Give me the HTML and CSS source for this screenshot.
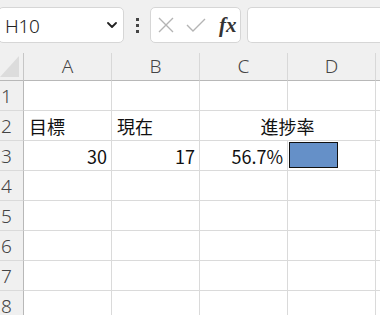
FILE: index.html
```html
<!DOCTYPE html>
<html lang="ja">
<head>
<meta charset="utf-8">
<link rel="stylesheet" href="styles.css">
</head>
<body>
<div class="app">
  <div class="toolbar">
    <div class="namebox">
      <span class="name">H10</span>
      <svg class="chev" width="10" height="6" viewBox="0 0 10 6"><path d="M1 1 L5 5 L9 1" fill="none" stroke="#222" stroke-width="1.8" stroke-linecap="round" stroke-linejoin="round"/></svg>
    </div>
    <div class="dots"><i></i><i></i><i></i></div>
    <div class="fxbox">
      <svg width="16" height="16" viewBox="0 0 16 16"><path d="M1 1 L15 15 M15 1 L1 15" stroke="#b4b4b4" stroke-width="1.4" fill="none"/></svg>
      <svg width="20" height="14" viewBox="0 0 20 14"><path d="M1 7 L7 13 L19 1" stroke="#b4b4b4" stroke-width="1.4" fill="none"/></svg>
      <span class="fx">fx</span>
    </div>
    <div class="formula"></div>
  </div>
  <div class="sheet">
    <div class="corner"><span class="tri"></span></div>
    <div class="ch">A</div><div class="ch">B</div><div class="ch">C</div><div class="ch">D</div><div class="ch last"></div>

    <div class="rh">1</div><div class="c"></div><div class="c"></div><div class="c"></div><div class="c"></div><div class="c last"></div>

    <div class="rh">2</div><div class="c">目標</div><div class="c">現在</div><div class="c merged">進捗率</div><div class="c last"></div>

    <div class="rh">3</div><div class="c num">30</div><div class="c num">17</div><div class="c num">56.7%</div><div class="c barcell"><div class="bar" style="width:56.7%"></div></div><div class="c last"></div>

    <div class="rh">4</div><div class="c"></div><div class="c"></div><div class="c"></div><div class="c"></div><div class="c last"></div>
    <div class="rh">5</div><div class="c"></div><div class="c"></div><div class="c"></div><div class="c"></div><div class="c last"></div>
    <div class="rh">6</div><div class="c"></div><div class="c"></div><div class="c"></div><div class="c"></div><div class="c last"></div>
    <div class="rh">7</div><div class="c"></div><div class="c"></div><div class="c"></div><div class="c"></div><div class="c last"></div>
    <div class="rh">8</div><div class="c"></div><div class="c"></div><div class="c"></div><div class="c"></div><div class="c last"></div>
  </div>
</div>
</body>
</html>
```
FILE: styles.css
```css
* { box-sizing: border-box; }
html, body { margin: 0; padding: 0; }
body {
  width: 380px;
  height: 315px;
  overflow: hidden;
  background: #ffffff;
  font-family: "Noto Sans CJK JP", "Noto Sans", sans-serif;
}
.app { width: 380px; }
.toolbar {
  height: 53px;
  background: #f0f0f0;
  display: flex;
  align-items: flex-start;
  padding-top: 7px;
}
.namebox {
  margin-left: -2px;
  width: 126px;
  height: 36px;
  background: #fff;
  border: 1px solid #d6d6d6;
  border-radius: 5px;
  display: flex;
  align-items: center;
  justify-content: space-between;
  padding: 2px 6px 0 6px;
}
.name {
  font-family: "Noto Sans", sans-serif;
  font-size: 19px;
  font-weight: 300;
  color: #222;
  letter-spacing: -0.3px;
}
.chev { margin-top: -2px; }
.dots {
  width: 26px;
  height: 36px;
  display: flex;
  flex-direction: column;
  align-items: center;
  justify-content: center;
  gap: 3px;
}
.dots i {
  display: block;
  width: 3px;
  height: 3px;
  background: #444;
}
.fxbox {
  width: 91px;
  height: 36px;
  background: #fff;
  border: 1px solid #d6d6d6;
  border-radius: 5px;
  display: flex;
  align-items: center;
  padding-left: 7px;
  gap: 12px;
}
.fx {
  font-family: "Liberation Serif", serif;
  font-style: italic;
  font-weight: bold;
  font-size: 21px;
  color: #333;
  margin-left: 1px;
  line-height: 1;
}
.formula {
  margin-left: 6px;
  flex: 1;
  height: 36px;
  background: #fff;
  border: 1px solid #d6d6d6;
  border-right: none;
  border-radius: 5px 0 0 5px;
}
.sheet {
  display: grid;
  grid-template-columns: 24px 88px 88px 88px 88px 1fr;
  grid-template-rows: 28px repeat(8, 30px);
  font-size: 18px;
  color: #111;
}
.corner {
  background: #f0f0f0;
  border-right: 1px solid #c6c6c6;
  border-bottom: 1px solid #b8b8b8;
  position: relative;
}
.tri {
  position: absolute;
  right: 4px;
  bottom: 3px;
  width: 0;
  height: 0;
  border-left: 19px solid transparent;
  border-bottom: 21px solid #dcdcdc;
}
.ch {
  background: #f0f0f0;
  border-right: 1px solid #d8d8d8;
  border-bottom: 1px solid #b8b8b8;
  display: flex;
  align-items: center;
  justify-content: center;
  font-family: "Noto Sans", sans-serif;
  font-weight: 300;
  font-size: 19px;
  color: #444;
  padding-bottom: 1px;
}
.rh {
  background: #f0f0f0;
  border-right: 1px solid #b8b8b8;
  border-bottom: 1px solid #dadada;
  font-family: "Noto Sans", sans-serif;
  font-weight: 300;
  font-size: 19px;
  color: #444;
  padding-left: 1px;
  display: flex;
  align-items: center;
  padding-top: 1px;
}
.c {
  border-right: 1px solid #dadada;
  border-bottom: 1px solid #dadada;
  display: flex;
  align-items: center;
  padding: 1px 5px 0 5px;
  white-space: nowrap;
}
.c.num { justify-content: flex-end; padding-right: 4px; }
.c.merged { grid-column: span 2; justify-content: center; }
.c.last { border-right: none; }
.ch.last { border-right: none; }
.barcell { padding: 1px 0 2px 1px; align-items: stretch; }
.bar {
  background: #6590c8;
  border: 1px solid #111;
}
```
